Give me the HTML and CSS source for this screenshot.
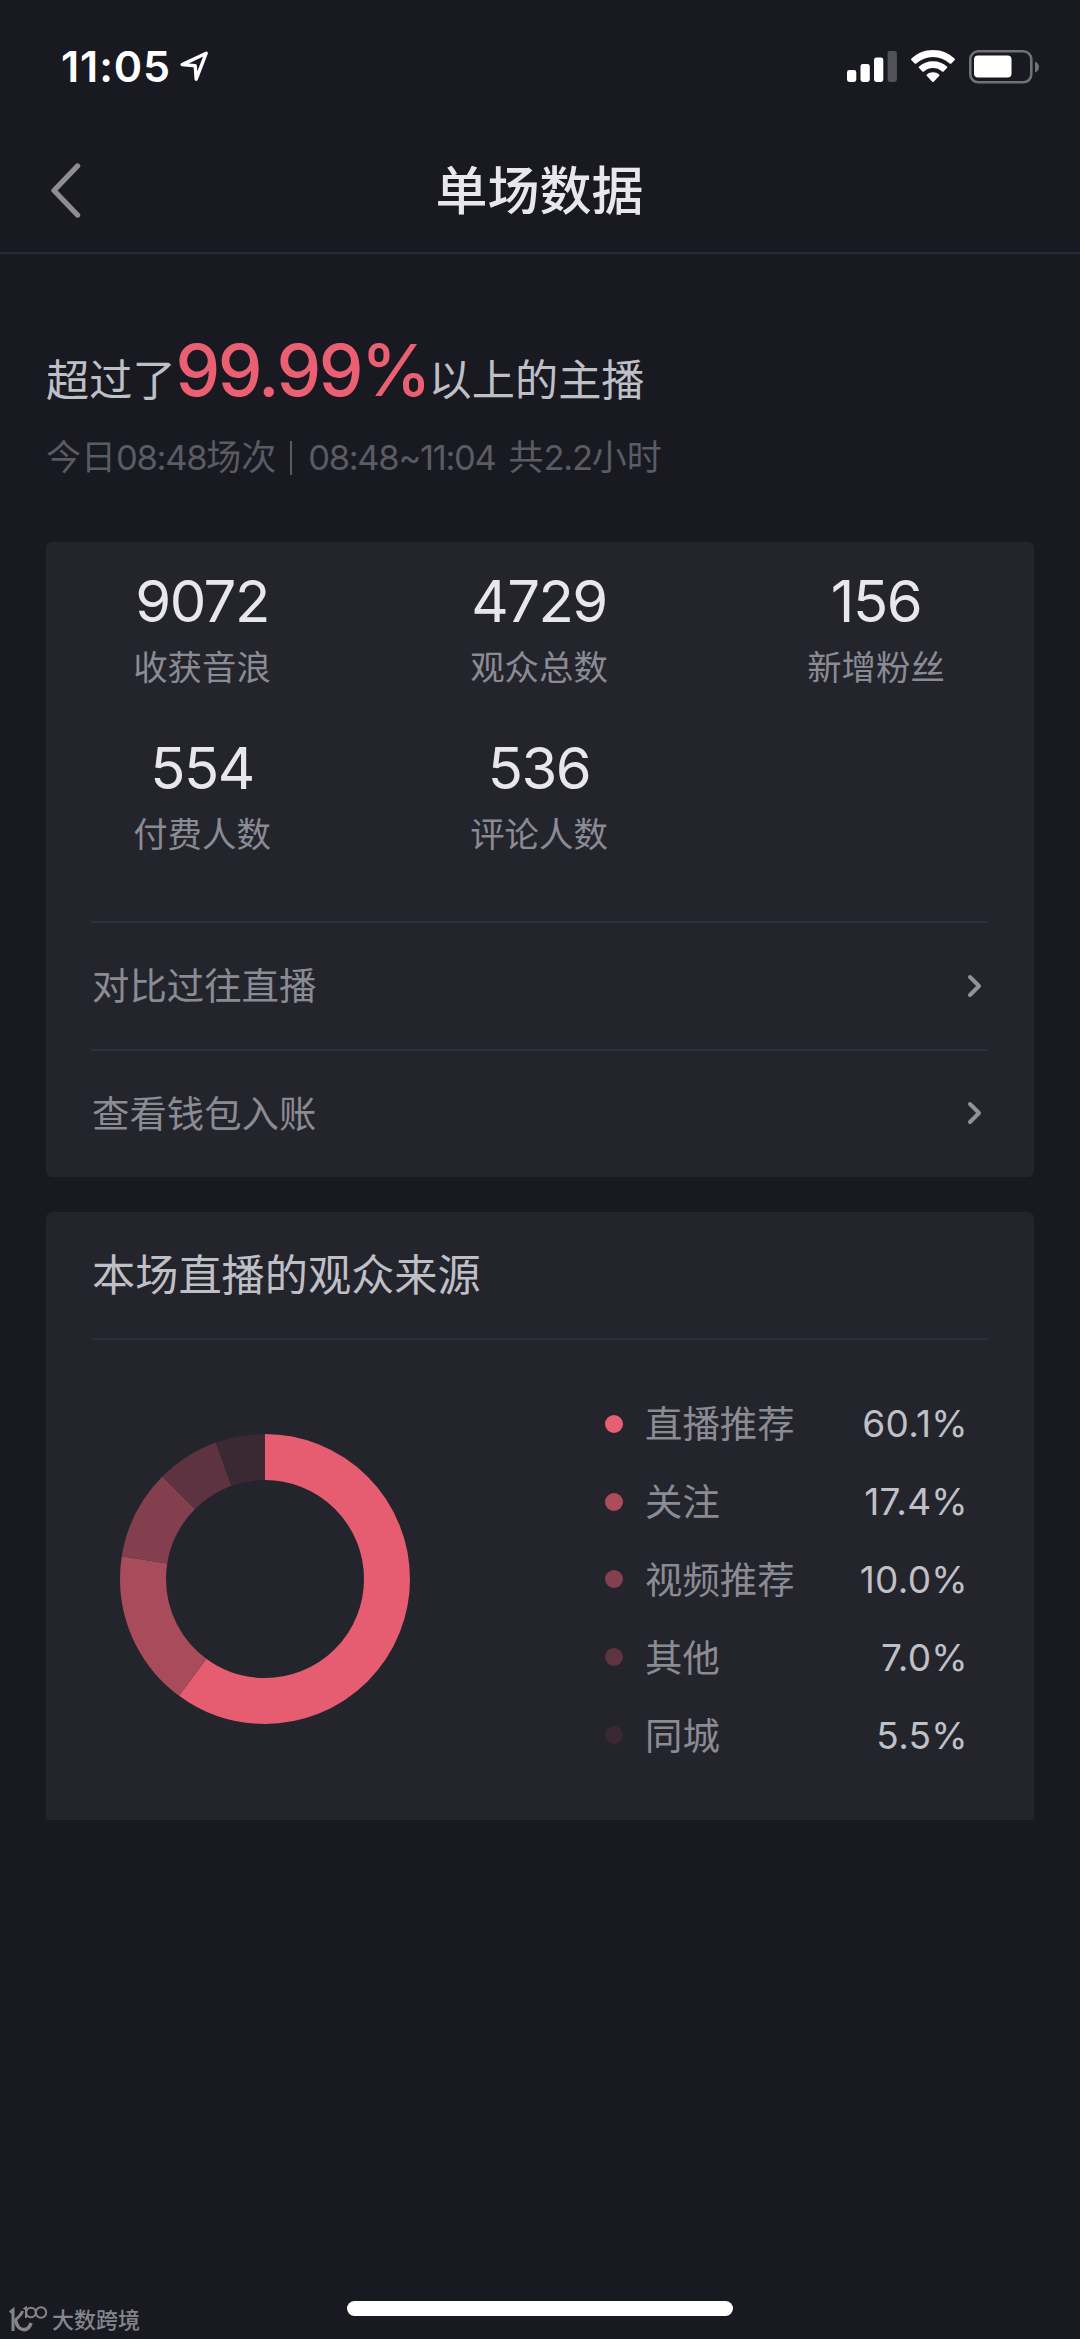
FILE: index.html
```html
<!DOCTYPE html>
<html lang="zh-CN">
<head>
<meta charset="utf-8">
<title>单场数据</title>
<link rel="stylesheet" href="styles.css">
</head>
<body>
<div class="screen">
  <div class="status-bar">
    <div class="status-left">
      <span class="clock">11:05</span>
      <svg class="location" width="30" height="32" viewBox="0 0 30 32"><path d="M2.2 13.6 L26.2 2.2 L16.2 28.2 L15.2 14.8 Z" fill="none" stroke="#fff" stroke-width="3.4" stroke-linejoin="round"/></svg>
    </div>
    <div class="status-right">
      <svg class="signal" width="50" height="33" viewBox="0 0 50 33"><g fill="#fff"><rect x="0" y="20" width="9.3" height="12" rx="2.4"/><rect x="13.5" y="14" width="9.3" height="18" rx="2.4"/><rect x="27" y="7.5" width="9.3" height="24.5" rx="2.4"/><rect x="40.6" y="1" width="9.3" height="31" rx="2.4" opacity=".25"/></g></svg>
      <svg class="wifi" width="44" height="33" viewBox="0 0 44 33"><path fill="#fff" d="M22 0 C30.500 0 38 3.200 43.500 8.600 Q44.300 9.500 43.500 10.300 L40.300 13.500 Q39.500 14.200 38.700 13.500 C34 9.300 28.300 7 22 7 C15.700 7 10 9.300 5.300 13.500 Q4.500 14.200 3.700 13.500 L.5 10.300 Q-.3 9.500 .5 8.600 C6 3.200 13.500 0 22 0 Z M22 11.200 C27.600 11.200 32.200 13.200 35.900 16.500 Q36.700 17.300 35.900 18.100 L32.600 21.400 Q31.800 22.100 31 21.400 C28.400 19.300 25.500 18.100 22 18.100 C18.500 18.100 15.600 19.300 13 21.400 Q12.200 22.100 11.400 21.400 L8.100 18.100 Q7.300 17.300 8.100 16.500 C11.800 13.200 16.400 11.200 22 11.200 Z M22 22.300 C24.400 22.300 26.600 23.100 28.100 24.400 Q28.900 25.200 28.100 26 L22.700 31.800 Q22 32.400 21.300 31.800 L15.900 26 Q15.100 25.200 15.900 24.400 C17.400 23.100 19.600 22.300 22 22.300 Z"/></svg>
      <svg class="battery" width="71" height="34" viewBox="0 0 71 34"><rect x="1.300" y="1.300" width="61" height="31" rx="8" fill="none" stroke="#717279" stroke-width="2.600"/><rect x="5" y="5.500" width="37.500" height="22" rx="4" fill="#fff"/><path d="M66 11.500 Q70 13 70 17 Q70 21 66 22.500Z" fill="#717279"/></svg>
    </div>
  </div>

  <header class="nav">
    <svg class="back" width="32" height="56" viewBox="0 0 32 56"><path d="M27.500 3 L4 27.500 L27.500 52" fill="none" stroke="#8e8d96" stroke-width="5.400" stroke-linecap="round" stroke-linejoin="round"/></svg>
    <h1 class="nav-title">单场数据</h1>
  </header>

  <section class="summary">
    <p class="rank">超过了<strong class="rank-value">99.99%</strong>以上的主播</p>
    <p class="session">今日<span class="num">08:48</span>场次<span class="bar"></span><span class="num">08:48~11:04</span><span class="total">共<span class="num">2.2</span>小时</span></p>
  </section>

  <main class="cards">
    <section class="card">
      <div class="stats">
        <div class="stat"><b class="stat-value">9072</b><span class="stat-label">收获音浪</span></div>
        <div class="stat"><b class="stat-value">4729</b><span class="stat-label">观众总数</span></div>
        <div class="stat"><b class="stat-value">156</b><span class="stat-label">新增粉丝</span></div>
        <div class="stat"><b class="stat-value">554</b><span class="stat-label">付费人数</span></div>
        <div class="stat"><b class="stat-value">536</b><span class="stat-label">评论人数</span></div>
      </div>
      <a class="link-row">对比过往直播<svg class="chevron" width="16" height="24" viewBox="0 0 16 24"><path d="M3 3 L12 12 L3 21" fill="none" stroke="#92929b" stroke-width="4" stroke-linecap="round" stroke-linejoin="round"/></svg></a>
      <a class="link-row">查看钱包入账<svg class="chevron" width="16" height="24" viewBox="0 0 16 24"><path d="M3 3 L12 12 L3 21" fill="none" stroke="#92929b" stroke-width="4" stroke-linecap="round" stroke-linejoin="round"/></svg></a>
    </section>

    <section class="card source">
      <h2 class="source-title">本场直播的观众来源</h2>
      <div class="source-body">
        <svg class="donut" width="290" height="290" viewBox="0 0 290 290">
          <g transform="rotate(-90 145 145)" fill="none" stroke-width="46">
            <circle cx="145" cy="145" r="122" pathLength="100" stroke="#e65c70" stroke-dasharray="60.1 39.9"/>
            <circle cx="145" cy="145" r="122" pathLength="100" stroke="#a84c5b" stroke-dasharray="17.4 82.6" stroke-dashoffset="-60.1"/>
            <circle cx="145" cy="145" r="122" pathLength="100" stroke="#833f4e" stroke-dasharray="10 90" stroke-dashoffset="-77.5"/>
            <circle cx="145" cy="145" r="122" pathLength="100" stroke="#5d3341" stroke-dasharray="7 93" stroke-dashoffset="-87.5"/>
            <circle cx="145" cy="145" r="122" pathLength="100" stroke="#3a2833" stroke-dasharray="5.5 94.5" stroke-dashoffset="-94.5"/>
          </g>
        </svg>
        <ul class="legend">
          <li class="item"><i class="dot c1"></i><span class="name">直播推荐</span><em class="pct">60.1%</em></li>
          <li class="item"><i class="dot c2"></i><span class="name">关注</span><em class="pct">17.4%</em></li>
          <li class="item"><i class="dot c3"></i><span class="name">视频推荐</span><em class="pct">10.0%</em></li>
          <li class="item"><i class="dot c4"></i><span class="name">其他</span><em class="pct">7.0%</em></li>
          <li class="item"><i class="dot c5"></i><span class="name">同城</span><em class="pct">5.5%</em></li>
        </ul>
      </div>
    </section>
  </main>

  <div class="home-indicator"></div>
  <div class="watermark">
    <svg width="40" height="28" viewBox="0 0 40 28"><g fill="none" stroke="#85858b"><path d="M1 7.500 L4 5 V26" stroke-width="3"/><path d="M13.500 6 C12.500 10 10 12 6 15" stroke-width="3"/><path d="M6.500 15 C9 27 19 27.500 22 18" stroke-width="3.600"/><path d="M14.500 4 L17 2.500 V13" stroke-width="2"/><circle cx="22" cy="7.500" r="4.800" stroke-width="2"/><circle cx="32" cy="7.500" r="5.200" stroke-width="2"/></g></svg>
    <span>大数跨境</span>
  </div>
</div>
</body>
</html>
```
FILE: styles.css
```css
* { box-sizing: border-box; margin: 0; padding: 0; }

body {
  background: #191922;
  color: #e8e8ec;
  font-family: Inter, "Noto Sans CJK SC", sans-serif;
}

.screen {
  position: relative;
  width: 1080px;
  height: 2339px;
  overflow: hidden;
  display: flex;
  flex-direction: column;
}

svg { display: block; flex: none; }

.status-bar {
  height: 132px;
  padding: 0 40px 0 61px;
  display: flex;
  justify-content: space-between;
}
.status-left { display: flex; padding-top: 43px; }
.clock {
  color: #fff;
  font-size: 43px;
  font-weight: 600;
  line-height: 46px;
  letter-spacing: .9px;
  width: 119px;
  white-space: nowrap;
}
.location { margin-top: 8px; }
.status-right { display: flex; padding-top: 50px; }
.wifi { margin-left: 14px; }
.battery { margin-left: 14px; }

.nav {
  height: 122px;
  border-bottom: 2px solid #2a2a35;
  display: grid;
  grid-template-columns: 100px 1fr 100px;
  align-items: start;
}
.back { margin: 31px 0 0 50px; }
.nav-title {
  text-align: center;
  font-size: 52px;
  font-weight: 500;
  line-height: 76px;
  padding: 22px 1px 0 0;
}

.summary { height: 288px; padding: 0 46px; }
.rank {
  display: flex;
  align-items: baseline;
  height: 168px;
  padding-top: 72px;
  font-size: 43.200px;
  line-height: 88px;
  color: #bfbfc6;
  white-space: nowrap;
}
.rank-value {
  color: #ea5f72;
  font-size: 71px;
  font-weight: 500;
  letter-spacing: -2.500px;
  width: 253px;
}
.session {
  display: flex;
  align-items: baseline;
  font-size: 35px;
  line-height: 71px;
  color: #5b5b64;
  white-space: nowrap;
}
.num { font-size: 34.500px; font-weight: 400; letter-spacing: -1.300px; }
.bar { width: 2px; height: 34px; margin: 0 16px 0 14px; background: #5b5b64; align-self: center; }
.total { margin-left: 13px; }

.cards { display: flex; flex-direction: column; gap: 35px; padding: 0 46px; }
.card { background: #24242d; border-radius: 6px; padding: 0 46px 0 45px; }
.card:first-child { height: 635px; }

.stats {
  height: 379px;
  padding: 23px 22px 0 21px;
  display: grid;
  grid-template-columns: 180px 180px 180px;
  grid-auto-rows: 167px;
  justify-content: space-between;
}
.stat { display: flex; flex-direction: column; align-items: center; }
.stat-value { font-size: 58px; font-weight: 400; line-height: 72px; letter-spacing: -1.500px; }
.stat-label { margin-top: 6px; font-size: 34.400px; line-height: 50px; color: #8b8b94; }

.link-row {
  height: 127.500px;
  border-top: 2px solid #30303a;
  display: flex;
  align-items: center;
  justify-content: space-between;
  padding: 0 5px 3px 1px;
  font-size: 37.400px;
  color: #8b8b94;
}
.chevron { margin-top: 3px; }

.source { height: 608px; border-radius: 6px 6px 0 0; }
.source-title {
  height: 128px;
  padding-left: 1px;
  border-bottom: 2px solid #2d2d38;
  font-size: 43.200px;
  font-weight: 400;
  line-height: 126px;
  color: #bfbfc6;
}
.source-body { display: flex; justify-content: space-between; padding: 45px 21px 0 29px; }
.donut { margin-top: 49px; }
.legend { list-style: none; width: 362px; }
.item {
  height: 77.800px;
  display: flex;
  align-items: center;
  font-size: 37.400px;
  color: #8b8b94;
}
.name { padding-bottom: 3px; }
.dot { width: 18px; height: 18px; border-radius: 50%; margin-right: 22px; }
.c1 { background: #e95f72; }
.c2 { background: #ad4c5c; }
.c3 { background: #85404e; }
.c4 { background: #5f3340; }
.c5 { background: #3b2835; }
.pct { margin: 0 -1px 0 auto; font-style: normal; font-size: 37px; font-weight: 400; letter-spacing: .3px; color: #c0c0c7; }

.home-indicator {
  position: absolute;
  left: 347px;
  top: 2301px;
  width: 386px;
  height: 15px;
  border-radius: 8px;
  background: #fff;
}
.watermark {
  position: absolute;
  left: 9px;
  top: 2305px;
  display: flex;
  gap: 3px;
  font-size: 22px;
  font-weight: 500;
  line-height: 31px;
  color: #85858b;
}
```
